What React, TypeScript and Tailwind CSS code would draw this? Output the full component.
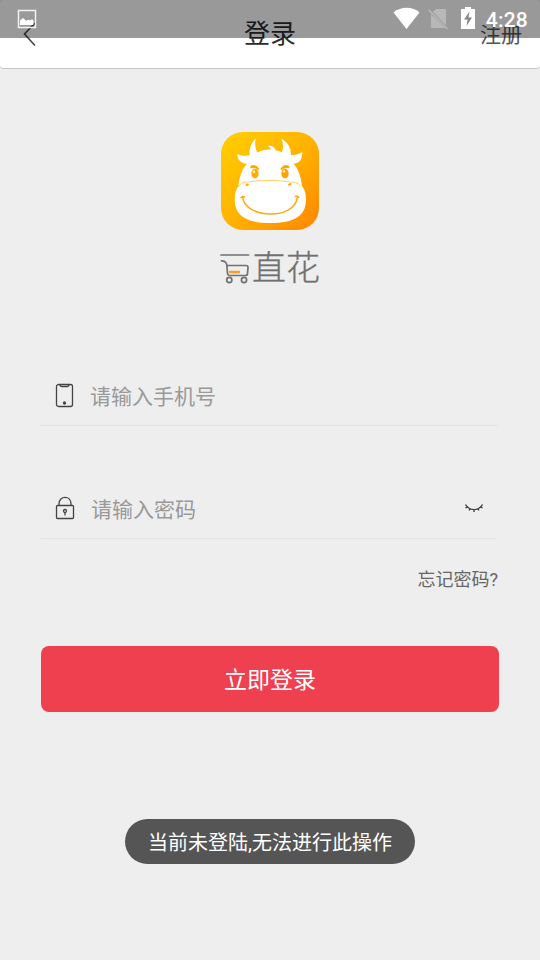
import { useState } from "react";

function StatusBar() {
  return (
    <div className="absolute inset-x-0 top-0 h-[38px] bg-black/40 flex items-start pl-[17px] pr-3 text-white">
      <svg className="mt-[9px]" width="20" height="20" viewBox="0 0 20 20">
        <rect x="1.5" y="1.5" width="17" height="17" fill="none" stroke="#f2f2f2" strokeWidth="1.5" />
        <path d="M3 16v-4.500l3-2.500 3.500 3c1-1.500 2-1.500 3.500-.5 1.500-1.500 3-1 3.500.5v3.500l-1 .5z" fill="#fff" />
      </svg>
      <svg className="mt-[7px] ml-auto" width="28" height="24" viewBox="0 0 28 24">
        <path d="M.5 5.500C8-.7 19.500-.7 26.500 5.500L13.500 22z" fill="#fff" />
      </svg>
      <svg className="mt-[7px] ml-[7px]" width="21" height="24" viewBox="0 0 21 24">
        <path d="M8 2h9a1 1 0 0 1 1 1v15.500L5 4.800zM3 7l14 14H4a1 1 0 0 1-1-1z" fill="#b8b8b8" />
        <path d="M1 3l18.500 19" stroke="#b8b8b8" strokeWidth="1.600" />
      </svg>
      <svg className="mt-[7px] ml-[12px]" width="14" height="23" viewBox="0 0 14 23">
        <path d="M4 0h6v2h4v20H0V2h4z" fill="#fff" />
        <path d="M8.500 4.500L3 12.500h3.500L5.500 19l5.500-8.500H7.500z" fill="#888" />
      </svg>
      <span className="ml-[11px] mt-[8px] text-[21px] leading-[25px] font-medium tracking-[0.2px] font-[Roboto,sans-serif]">4:28</span>
    </div>
  );
}

function CowLogo() {
  return (
    <svg width="98" height="98" viewBox="33 30 294 294">
      <defs>
        <linearGradient id="cow" x1="0" y1="0" x2="1" y2="1">
          <stop offset="0" stopColor="#ffcf00" />
          <stop offset="0.5" stopColor="#ffb300" />
          <stop offset="1" stopColor="#ff8500" />
        </linearGradient>
      </defs>
      <rect x="33" y="30" width="294" height="294" rx="66" fill="url(#cow)" />
      <path
        d="M137 50c-13 12-20 28-18 50-14 2-26 2-37-4 0 17 10 28 29 29-16 18-23 40-26 67-7 10-11 22-11 41 0 48 36 70 107 70s107-22 107-70c0-19-4-31-12-41-3-26-10-49-25-67 18-1 26-13 26-35-10 7-21 10-34 9 0-22-9-38-29-49 6 16 7 28 1 41-6-3-12-5-18-6-3-10-12-16-24-13 6 3 8 6 9 11-14-1-28 1-40 9-6-12-8-25-5-42z"
        fill="#fff"
      />
      <path
        d="M84 195c7-9 13-15 21-15 5 1 9 1 14-1 36-5 82-5 117 0 4 2 9 2 14 1 9 0 18 7 25 16"
        fill="none"
        stroke="#ffb51c"
        strokeWidth="2"
        strokeLinecap="round"
      />
      <ellipse cx="112" cy="188" rx="5" ry="3.500" transform="rotate(-20 112 188)" fill="#ffad0b" />
      <ellipse cx="239" cy="187" rx="5" ry="3.500" transform="rotate(-20 239 187)" fill="#ffa30b" />
      <path d="M98 226c8 64 156 69 164 0M93 227c3-4 7-5 11-2M256 223c4-2 8-1 10 3" fill="none" stroke="#ffaa0a" strokeWidth="4.500" strokeLinecap="round" />
      <path d="M121 132c10-7 21-2 27 9l-3 4c-8-7-15-8-24-6zM238 132c-10-7-21-2-27 9l3 4c8-7 15-8 24-6z" fill="#ffaa00" />
      <ellipse cx="135" cy="155" rx="11" ry="14.500" fill="#ffaf00" />
      <ellipse cx="225" cy="155" rx="11" ry="14.500" fill="#ffa200" />
      <circle cx="132" cy="149" r="3.500" fill="#fff" />
      <circle cx="222" cy="148" r="3.500" fill="#fff" />
    </svg>
  );
}

function BrandName() {
  return (
    <div className="flex h-[38px] mt-[18px] text-[#707070]">
      <svg width="32" height="38" viewBox="0 0 32 38" fill="none" stroke="#707070" strokeWidth="1.700" strokeLinecap="round" strokeLinejoin="round">
        <path d="M1 7h27.500M1.500 12.800c3 0 4.800 1.200 5.300 4L7.500 25.500c.2 1.500 1 2 2.500 2h15.500c1.500 0 2-.6 2-2l.5-6c0-1.400-.5-2-2-2H6.800" />
        <circle cx="9.300" cy="32" r="2.600" />
        <circle cx="24" cy="32" r="2.600" />
        <path d="M10 24h9" stroke="#ff9a22" strokeWidth="2.400" />
      </svg>
      <span className="text-[34px] leading-[36px] font-light whitespace-nowrap [-webkit-text-stroke:0.3px_#707070]">直花</span>
    </div>
  );
}

export default function App() {
  const [phone, setPhone] = useState("");
  const [password, setPassword] = useState("");
  const [visible, setVisible] = useState(false);

  return (
    <main className="relative w-[540px] h-[960px] overflow-hidden bg-[#eeeeee] flex flex-col font-['Noto_Sans_CJK_SC',sans-serif]">
      <header className="h-[69px] shrink-0 bg-white border-b border-[#c4c4c4] rounded-[4px] grid grid-cols-3 items-start px-[18px]">
        <svg className="mt-[22px] ml-[5px]" width="14" height="25" viewBox="0 0 14 25" fill="none" stroke="#444" strokeWidth="1.600">
          <path d="M12 1L1.500 12 12 23.500" />
        </svg>
        <h1 className="mt-[13px] text-[26px] leading-[38px] text-center text-[#2c2c2c]">登录</h1>
        <span className="mt-[18px] text-[21px] leading-[30px] text-right text-[#555555]">注册</span>
      </header>
      <StatusBar />

      <section className="mt-[63px] flex flex-col items-center">
        <CowLogo />
        <BrandName />
      </section>

      <form className="mt-[80px] mx-[41px] flex flex-col" onSubmit={(e) => e.preventDefault()}>
        <label className="mr-px h-[60px] border-b border-[#e4e4e4] flex items-center pl-[14px]">
          <svg width="19" height="25" viewBox="0 0 19 25" fill="none" stroke="#444" strokeWidth="1.300">
            <rect x="1.500" y="1.500" width="16" height="22" rx="2" />
            <path d="M5 1.500c0 2 1 2 2 2h5c1 0 2 0 2-2" />
            <circle cx="9.500" cy="20" r="1" fill="#444" />
          </svg>
          <input
            value={phone}
            onChange={(e) => setPhone(e.target.value)}
            placeholder="请输入手机号"
            className="ml-4 mb-[2px] w-[300px] h-[32px] text-[21px] outline-none placeholder:text-[#999999]"
          />
        </label>

        <div className="mt-[53px] mr-[2px] h-[60px] border-b border-[#e4e4e4] flex items-center pl-[14px] pr-[13px]">
          <svg width="20" height="25" viewBox="0 0 20 25" fill="none" stroke="#444" strokeWidth="1.300">
            <rect x="1.500" y="9.500" width="17" height="13" rx="1" />
            <path d="M4 9.500V8c0-8.800 12-8.800 12 0v1.500" />
            <circle cx="10" cy="15" r="1.500" />
            <path d="M10 16.500v3" />
          </svg>
          <input
            type={visible ? "text" : "password"}
            value={password}
            onChange={(e) => setPassword(e.target.value)}
            placeholder="请输入密码"
            className="ml-4 mb-[2px] w-[300px] h-[32px] text-[21px] outline-none placeholder:text-[#999999]"
          />
          <button type="button" className="ml-auto mb-[2px]" onClick={() => setVisible(!visible)}>
            <svg width="20" height="10" viewBox="0 0 20 10" fill="none" stroke="#444" strokeWidth="1.400">
              <path d="M1.500 1.500c4 6.800 13 6.800 17 0M3.500 4l-2 .8M16.500 4l2 .8M6 5.500l-.8 2M14 5.500l.8 2M10 6.500V9" />
            </svg>
          </button>
        </div>

        <a className="mt-[26px] mr-px h-[26px] self-end text-[18px] leading-[26px] text-[#666666]">
          忘记密码<span className="font-[Roboto,sans-serif]">?</span>
        </a>
        <button type="submit" className="mt-[55px] pb-[2px] h-[66px] rounded-[8px] bg-[#ef404f] text-white text-[23px]">
          立即登录
        </button>
      </form>

      <div className="mt-[107px] h-[45px] w-[290px] self-center rounded-full bg-[#555555] text-white text-[20px] leading-[45px] text-center whitespace-nowrap">
        当前未登陆<span className="font-[Roboto,sans-serif]">,</span>无法进行此操作
      </div>
    </main>
  );
}
